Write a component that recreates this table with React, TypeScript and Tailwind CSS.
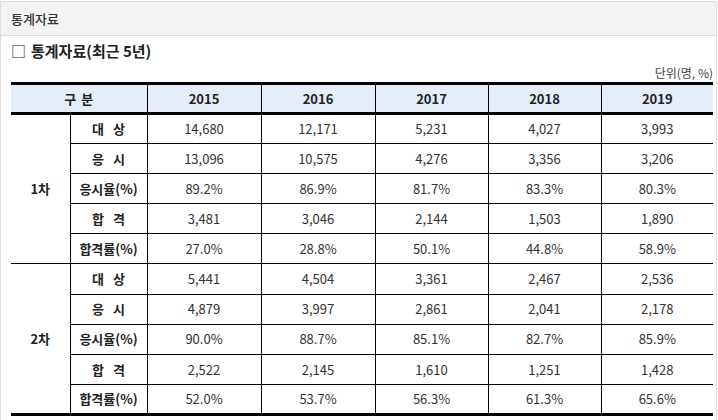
import React from "react";

const years = ["2015", "2016", "2017", "2018", "2019"];
const labels = ["대 상", "응 시", "응시율(%)", "합 격", "합격률(%)"];
const data1 = [
  ["14,680", "12,171", "5,231", "4,027", "3,993"],
  ["13,096", "10,575", "4,276", "3,356", "3,206"],
  ["89.2%", "86.9%", "81.7%", "83.3%", "80.3%"],
  ["3,481", "3,046", "2,144", "1,503", "1,890"],
  ["27.0%", "28.8%", "50.1%", "44.8%", "58.9%"],
];
const data2 = [
  ["5,441", "4,504", "3,361", "2,467", "2,536"],
  ["4,879", "3,997", "2,861", "2,041", "2,178"],
  ["90.0%", "88.7%", "85.1%", "82.7%", "85.9%"],
  ["2,522", "2,145", "1,610", "1,251", "1,428"],
  ["52.0%", "53.7%", "56.3%", "61.3%", "65.6%"],
];

function Label({ text }: { text: string }) {
  if (text.includes(" ")) {
    const [a, b] = text.split(" ");
    return (
      <span className="inline-flex gap-[9px] justify-center">
        <span>{a}</span>
        <span>{b}</span>
      </span>
    );
  }
  return <span>{text}</span>;
}

function Group({ name, rows, first }: { name: string; rows: string[][]; first: boolean }) {
  return (
    <>
      {rows.map((r, i) => (
        <tr key={i} className="h-[30.1px]">
          {i === 0 && (
            <td
              rowSpan={5}
              className={`text-center font-bold text-[#222] border-r border-black ${first ? "" : "border-t border-black"}`}
            >
              {name}
            </td>
          )}
          <td
            className={`text-center font-bold text-[#222] border-r border-black ${i === 0 ? (first ? "" : "border-t border-black") : "border-t border-black"}`}
          >
            <Label text={labels[i]} />
          </td>
          {r.map((v, j) => (
            <td
              key={j}
              className={`text-center text-[#333] ${j < 4 ? "border-r border-black" : ""} ${i === 0 && first ? "" : "border-t border-black"}`}
            >
              {v}
            </td>
          ))}
        </tr>
      ))}
    </>
  );
}

export default function App() {
  return (
    <div
      className="w-[718px] h-[420px] bg-white overflow-hidden"
      style={{ fontFamily: '"Noto Sans CJK KR", "Noto Sans", sans-serif' }}
    >
      <div className="mt-[1px] w-[717px] h-[419px] border-l border-t border-r border-[#dedede]">
        <div className="h-[34px] bg-[#f3f3f3] border-b border-[#dcdcdc] flex items-center pl-[10px] text-[13px] font-medium text-[#333]">
          통계자료
        </div>
        <div className="pl-[10px] pt-[3px] h-[28px] flex items-center text-[15px] font-bold text-[#222]">
          <span className="font-normal mr-[5px]">□</span>통계자료(최근 5년)
        </div>
        <div className="h-[18px] flex items-center justify-end pr-[3px] text-[12px] text-[#444]">
          단위(명, %)
        </div>
        <table className="ml-[10px] w-[702px] border-collapse text-[13px] table-fixed border-t-[3px] border-b-[3px] border-black">
          <colgroup>
            <col className="w-[59px]" />
            <col className="w-[77px]" />
            <col className="w-[114px]" />
            <col className="w-[114px]" />
            <col className="w-[113px]" />
            <col className="w-[113px]" />
            <col className="w-[112px]" />
          </colgroup>
          <thead>
            <tr className="h-[30px] bg-[#e4edf8]">
              <th colSpan={2} className="font-bold text-[#222] border-r border-black border-b-[3px] border-b-black">
                <span className="inline-flex gap-[5px]">
                  <span>구</span>
                  <span>분</span>
                </span>
              </th>
              {years.map((y, j) => (
                <th
                  key={y}
                  className={`font-bold text-[#222] border-b-[3px] border-b-black ${j < 4 ? "border-r border-black" : ""}`}
                >
                  {y}
                </th>
              ))}
            </tr>
          </thead>
          <tbody>
            <Group name="1차" rows={data1} first={true} />
            <Group name="2차" rows={data2} first={false} />
          </tbody>
        </table>
      </div>
    </div>
  );
}
